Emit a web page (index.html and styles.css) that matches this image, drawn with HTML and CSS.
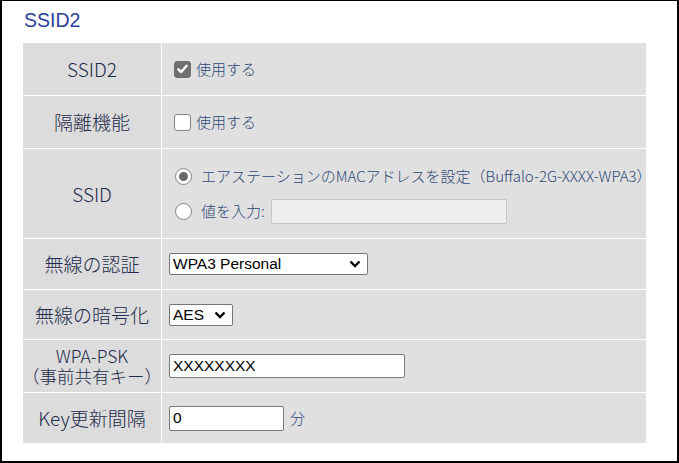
FILE: index.html
```html
<!DOCTYPE html>
<html lang="ja">
<head>
<meta charset="utf-8">
<title>SSID2</title>
<link rel="stylesheet" href="styles.css">
</head>
<body>
<div class="frame">
  <h2 class="title">SSID2</h2>
  <div class="form">
    <div class="lbl"><span>SSID2</span></div>
    <div class="val">
      <span class="check checked"><svg viewBox="0 0 16 16" width="16" height="16"><path d="M3.6 8.4 L6.6 11.2 L12.4 4.6" fill="none" stroke="#fff" stroke-width="2.6" stroke-linecap="round" stroke-linejoin="round"/></svg></span>
      <span class="txt">使用する</span>
    </div>

    <div class="lbl"><span>隔離機能</span></div>
    <div class="val">
      <span class="check"></span>
      <span class="txt">使用する</span>
    </div>

    <div class="lbl"><span>SSID</span></div>
    <div class="val stack">
      <div class="opt">
        <span class="radio on"></span>
        <span class="txt">エアステーションのMACアドレスを設定（Buffalo-2G-XXXX-WPA3）</span>
      </div>
      <div class="opt">
        <span class="radio"></span>
        <span class="txt">値を入力:</span>
        <input class="field ssid-field" type="text" value="">
      </div>
    </div>

    <div class="lbl"><span>無線の認証</span></div>
    <div class="val">
      <div class="select sel-auth"><span>WPA3 Personal</span><svg class="chev" viewBox="0 0 12 8" width="12" height="8"><path d="M1.5 1.5 L6 6 L10.5 1.5" fill="none" stroke="#000" stroke-width="2.3"/></svg></div>
    </div>

    <div class="lbl"><span>無線の暗号化</span></div>
    <div class="val">
      <div class="select sel-enc"><span>AES</span><svg class="chev" viewBox="0 0 12 8" width="12" height="8"><path d="M1.5 1.5 L6 6 L10.5 1.5" fill="none" stroke="#000" stroke-width="2.3"/></svg></div>
    </div>

    <div class="lbl two">
      <div class="lines">
        <span class="line">WPA-PSK</span>
        <span class="line">（事前共有キー）</span>
      </div>
    </div>
    <div class="val">
      <input class="field psk-field" type="text" value="XXXXXXXX">
    </div>

    <div class="lbl"><span>Key更新間隔</span></div>
    <div class="val">
      <input class="field key-field" type="text" value="0">
      <span class="txt unit">分</span>
    </div>
  </div>
</div>
</body>
</html>
```

FILE: styles.css
```css
html, body {
  margin: 0;
  padding: 0;
  background: #fff;
}

.frame {
  box-sizing: border-box;
  width: 679px;
  height: 463px;
  border-style: solid;
  border-color: #000;
  border-width: 1px 2px 2px 2px;
  padding: 8px 31px 0 21px;
  font-family: "Noto Sans CJK JP", "Liberation Sans", sans-serif;
}

.title {
  margin: 0 0 12px 1px;
  font-family: "Liberation Sans", sans-serif;
  font-weight: normal;
  font-size: 19.5px;
  line-height: 22px;
  color: #2b3f9a;
}

.form {
  display: grid;
  grid-template-columns: 138px minmax(0, 1fr);
  grid-template-rows: 52px 52px 89px 50px 49px 52px 50px;
  gap: 1px;
  background: #fff;
}

.lbl {
  background: #dcdcdc;
  display: flex;
  align-items: center;
  justify-content: center;
  text-align: center;
  font-size: 19px;
  line-height: 20px;
  color: #1d2b4b;
  font-weight: 300;
}

.lbl span {
  white-space: nowrap;
}

.lbl.two {
  font-size: 17.5px;
}

.lines {
  display: flex;
  flex-direction: column;
  align-items: center;
}

.lines .line {
  display: block;
  line-height: 20px;
}

.val {
  background: #e0e0e0;
  display: flex;
  align-items: center;
  padding-left: 7px;
}

.val.stack {
  flex-direction: column;
  align-items: flex-start;
  justify-content: center;
  gap: 10px;
}

.opt {
  display: flex;
  align-items: center;
  height: 25px;
}

.txt {
  font-size: 15px;
  line-height: 20px;
  color: #2c4877;
  font-weight: 300;
  white-space: nowrap;
}

.check {
  box-sizing: border-box;
  width: 17px;
  height: 17px;
  margin: 0 5px 0 5px;
  border: 1.5px solid #858585;
  border-radius: 3px;
  background: #fff;
  display: flex;
  align-items: center;
  justify-content: center;
}

.check.checked {
  background: #707070;
  border-color: #707070;
}

.check svg {
  display: block;
}

.radio {
  box-sizing: border-box;
  width: 17px;
  height: 17px;
  margin: 0 9px 0 6px;
  border: 1.5px solid #858585;
  border-radius: 50%;
  background: #fff;
  display: flex;
  align-items: center;
  justify-content: center;
}

.radio.on::after {
  content: "";
  width: 9px;
  height: 9px;
  border-radius: 50%;
  background: #6a6a6a;
}

.field {
  box-sizing: border-box;
  margin: 0;
  border: 1px solid #7a7a7a;
  border-radius: 2px;
  background: #fff;
  font-family: "Liberation Sans", sans-serif;
  font-size: 15.5px;
  color: #000;
  padding: 0 3px;
  outline: none;
}

.ssid-field {
  width: 236px;
  height: 25px;
  margin-left: 6px;
  background: #efefef;
  border-color: #c6c6c6;
}

.psk-field {
  width: 236px;
  height: 24px;
}

.key-field {
  width: 115px;
  height: 25px;
}

.unit {
  margin-left: 6px;
}

.select {
  box-sizing: border-box;
  display: flex;
  align-items: center;
  justify-content: space-between;
  height: 22px;
  border: 1px solid #767676;
  border-radius: 2px;
  background: #fff;
  font-family: "Liberation Sans", sans-serif;
  font-size: 15.5px;
  color: #000;
  padding: 0 6px 0 3px;
}

.sel-auth {
  width: 199px;
}

.sel-enc {
  width: 64px;
}

.chev {
  display: block;
}
```
